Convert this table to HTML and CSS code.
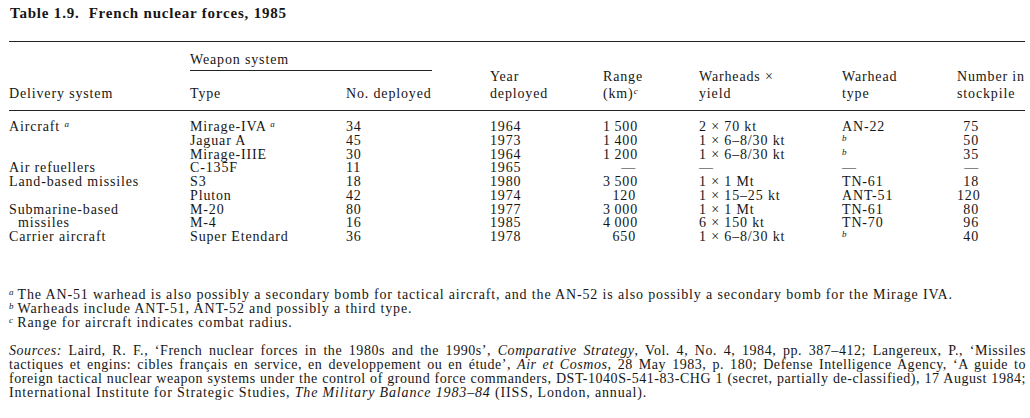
FILE: index.html
```html
<!DOCTYPE html>
<html lang="en">
<head>
<meta charset="utf-8">
<title>Table 1.9. French nuclear forces, 1985</title>
<link rel="stylesheet" href="styles.css">
</head>
<body>
<div class="page">
  <h1 class="title">Table 1.9.&nbsp; French nuclear forces, 1985</h1>
  <table class="forces">
    <colgroup>
      <col class="c-del"><col class="c-type"><col class="c-no"><col class="c-year"><col class="c-range"><col class="c-yield"><col class="c-wtype"><col class="c-stock">
    </colgroup>
    <thead>
      <tr class="h1">
        <th rowspan="2">Delivery system</th>
        <th colspan="2" class="group"><span>Weapon system</span></th>
        <th rowspan="2">Year<br>deployed</th>
        <th rowspan="2">Range<br>(km)<i class="sup">c</i></th>
        <th rowspan="2">Warheads ×<br>yield</th>
        <th rowspan="2">Warhead<br>type</th>
        <th rowspan="2">Number in<br>stockpile</th>
      </tr>
      <tr class="h2">
        <th>Type</th>
        <th>No. deployed</th>
      </tr>
    </thead>
    <tbody>
      <tr><td>Aircraft <i class="sup">a</i></td><td>Mirage-IVA <i class="sup">a</i></td><td>34</td><td>1964</td><td><span class="rn">1&#8201;500</span></td><td>2 × 70 kt</td><td>AN-22</td><td><span class="sn">75</span></td></tr>
      <tr><td></td><td>Jaguar A</td><td>45</td><td>1973</td><td><span class="rn">1&#8201;400</span></td><td>1 × 6–8/30 kt</td><td><i class="sup">b</i></td><td><span class="sn">50</span></td></tr>
      <tr><td></td><td>Mirage-IIIE</td><td>30</td><td>1964</td><td><span class="rn">1&#8201;200</span></td><td>1 × 6–8/30 kt</td><td><i class="sup">b</i></td><td><span class="sn">35</span></td></tr>
      <tr><td>Air refuellers</td><td>C-135F</td><td>11</td><td>1965</td><td><span class="rn">—</span></td><td>—</td><td>—</td><td><span class="sn">—</span></td></tr>
      <tr><td>Land-based missiles</td><td>S3</td><td>18</td><td>1980</td><td><span class="rn">3&#8201;500</span></td><td>1 × 1 Mt</td><td>TN-61</td><td><span class="sn">18</span></td></tr>
      <tr><td></td><td>Pluton</td><td>42</td><td>1974</td><td><span class="rn">120</span></td><td>1 × 15–25 kt</td><td>ANT-51</td><td><span class="sn">120</span></td></tr>
      <tr><td>Submarine-based</td><td>M-20</td><td>80</td><td>1977</td><td><span class="rn">3&#8201;000</span></td><td>1 × 1 Mt</td><td>TN-61</td><td><span class="sn">80</span></td></tr>
      <tr><td class="indent">missiles</td><td>M-4</td><td>16</td><td>1985</td><td><span class="rn">4&#8201;000</span></td><td>6 × 150 kt</td><td>TN-70</td><td><span class="sn">96</span></td></tr>
      <tr><td>Carrier aircraft</td><td>Super Etendard</td><td>36</td><td>1978</td><td><span class="rn">650</span></td><td>1 × 6–8/30 kt</td><td><i class="sup">b</i></td><td><span class="sn">40</span></td></tr>
    </tbody>
  </table>
  <div class="notes">
    <p><i class="sup">a</i> The AN-51 warhead is also possibly a secondary bomb for tactical aircraft, and the AN-52 is also possibly a secondary bomb for the Mirage IVA.</p>
    <p><i class="sup">b</i> Warheads include ANT-51, ANT-52 and possibly a third type.</p>
    <p><i class="sup">c</i> Range for aircraft indicates combat radius.</p>
  </div>
  <div class="sources">
    <div class="ln"><i>Sources:</i> Laird, R. F., ‘French nuclear forces in the 1980s and the 1990s’, <i>Comparative Strategy</i>, Vol. 4, No. 4, 1984, pp. 387–412; Langereux, P., ‘Missiles</div>
    <div class="ln">tactiques et engins: cibles français en service, en developpement ou en étude’, <i>Air et Cosmos,</i> 28 May 1983, p. 180; Defense Intelligence Agency, ‘A guide to</div>
    <div class="ln">foreign tactical nuclear weapon systems under the control of ground force commanders, DST-1040S-541-83-CHG 1 (secret, partially de-classified), 17 August 1984;</div>
    <div class="ln">International Institute for Strategic Studies, <i>The Military Balance 1983–84</i> (IISS, London, annual).</div>
  </div>
</div>
</body>
</html>
```
FILE: styles.css
```css
* { box-sizing: border-box; }

body {
  margin: 0;
  background: #ffffff;
}

.page {
  padding: 5px 4px 0 9px;
  font-family: "Liberation Serif", "Times New Roman", serif;
  font-size: 14px;
  letter-spacing: 0.85px;
  color: #161616;
}

.title {
  margin: 0 0 19px 1px;
  font-size: 15px;
  font-weight: bold;
  line-height: 17px;
  letter-spacing: 0.8px;
}

.forces {
  width: 1016px;
  table-layout: fixed;
  border-collapse: separate;
  border-spacing: 0;
  border-top: 1px solid #222;
}

.c-del { width: 181px; }
.c-type { width: 156px; }
.c-no { width: 144px; }
.c-year { width: 113px; }
.c-range { width: 96px; }
.c-yield { width: 143px; }
.c-wtype { width: 115px; }
.c-stock { width: 68px; }

.forces th,
.forces td {
  padding: 0;
  text-align: left;
  font-weight: normal;
  white-space: nowrap;
}

.forces thead th {
  vertical-align: bottom;
  line-height: 17px;
  padding-bottom: 8px;
  border-bottom: 1px solid #222;
}

.forces thead th.group {
  vertical-align: top;
  border-bottom: 0;
  padding: 11px 0 0;
  line-height: 14px;
}

.group span {
  display: block;
  width: 242px;
  padding-bottom: 3px;
  border-bottom: 1px solid #222;
}

.forces .h2 th {
  padding-top: 14px;
}

.forces td {
  vertical-align: top;
  line-height: 13.75px;
  height: 13.75px;
}

.forces tbody tr:first-child td {
  padding-top: 9px;
  height: 22.75px;
}

.indent { padding-left: 9px !important; }

.rn {
  display: inline-block;
  width: 33px;
  text-align: right;
}

.sn {
  display: inline-block;
  width: 22px;
  text-align: right;
}

.sup {
  font-style: italic;
  font-size: 9px;
  line-height: 0;
  letter-spacing: 0;
  vertical-align: 4px;
}

.notes {
  margin-top: 44px;
}

.notes p {
  margin: 0;
  line-height: 14px;
}

.sources {
  margin-top: 14px;
  width: 1017px;
  letter-spacing: 0.55px;
}

.sources .ln {
  line-height: 14px;
  text-align: justify;
  text-align-last: justify;
  white-space: nowrap;
}

.sources .ln:last-child {
  text-align-last: left;
  letter-spacing: 0.85px;
}
```
